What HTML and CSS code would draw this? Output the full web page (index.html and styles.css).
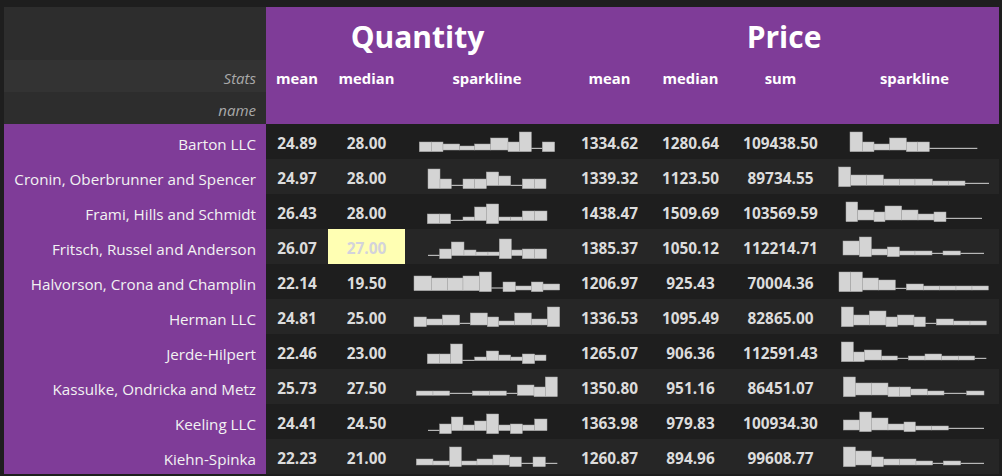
FILE: index.html
```html
<!DOCTYPE html>
<html>
<head>
<meta charset="utf-8">
<link rel="stylesheet" href="styles.css">
</head>
<body>
<table class="df">
<colgroup>
<col class="c-idx"><col class="c-qmean"><col class="c-qmed"><col class="c-qspark"><col class="c-pmean"><col class="c-pmed"><col class="c-psum"><col class="c-pspark">
</colgroup>
<thead>
<tr class="r-title"><th class="blank"></th><th class="grp" colspan="3">Quantity</th><th class="grp" colspan="4">Price</th></tr>
<tr class="r-stats"><th class="lvl lvl-alt">Stats</th><th class="col">mean</th><th class="col">median</th><th class="col">sparkline</th><th class="col">mean</th><th class="col">median</th><th class="col">sum</th><th class="col">sparkline</th></tr>
<tr class="r-name"><th class="lvl">name</th><th class="col"></th><th class="col"></th><th class="col"></th><th class="col"></th><th class="col"></th><th class="col"></th><th class="col"></th></tr>
</thead>
<tbody>
<tr>
<th class="idx">Barton LLC</th><td>24.89</td><td>28.00</td>
<td class="sp sp-q"><svg class="spark" width="156" height="35" viewBox="0 0 468 105"><rect x="34" y="54" width="36" height="29"/><rect x="70" y="54" width="35" height="29"/><rect x="105" y="60" width="50" height="18"/><rect x="155" y="66" width="45" height="12"/><rect x="200" y="60" width="48" height="18"/><rect x="248" y="42" width="52" height="36"/><rect x="300" y="54" width="34" height="29"/><rect x="334" y="24" width="36" height="59"/><rect class="z" x="370" y="71.5" width="33" height="3"/><rect x="403" y="54" width="37" height="29"/></svg></td>
<td>1334.62</td><td>1280.64</td><td>109438.50</td>
<td class="sp sp-p"><svg class="spark" width="156" height="35" viewBox="0 0 468 105"><rect x="48" y="24" width="37" height="59"/><rect x="85" y="54" width="35" height="29"/><rect x="120" y="60" width="47" height="18"/><rect x="167" y="42" width="50" height="36"/><rect x="217" y="54" width="33" height="29"/><rect x="250" y="54" width="36" height="29"/><rect class="z" x="286" y="71.5" width="144" height="3"/></svg></td>
</tr>
<tr>
<th class="idx">Cronin, Oberbrunner and Spencer</th><td>24.97</td><td>28.00</td>
<td class="sp sp-q"><svg class="spark" width="156" height="35" viewBox="0 0 468 105"><rect x="60" y="30" width="36" height="59"/><rect x="96" y="60" width="34" height="29"/><rect class="z" x="130" y="77.5" width="35" height="3"/><rect x="165" y="60" width="35" height="29"/><rect x="200" y="60" width="35" height="29"/><rect x="235" y="39" width="37" height="41"/><rect x="272" y="51" width="36" height="29"/><rect class="z" x="308" y="77.5" width="35" height="3"/><rect x="343" y="60" width="37" height="29"/><rect x="380" y="60" width="34" height="29"/></svg></td>
<td>1339.32</td><td>1123.50</td><td>89734.55</td>
<td class="sp sp-p"><svg class="spark" width="156" height="35" viewBox="0 0 468 105"><rect x="14" y="24" width="36" height="59"/><rect x="50" y="48" width="47" height="31"/><rect x="97" y="48" width="51" height="31"/><rect x="148" y="60" width="48" height="19"/><rect x="196" y="60" width="47" height="19"/><rect x="243" y="60" width="52" height="19"/><rect x="295" y="66" width="48" height="13"/><rect x="343" y="66" width="50" height="13"/><rect class="z" x="393" y="71.5" width="72" height="3"/></svg></td>
</tr>
<tr>
<th class="idx">Frami, Hills and Schmidt</th><td>26.43</td><td>28.00</td>
<td class="sp sp-q"><svg class="spark" width="156" height="35" viewBox="0 0 468 105"><rect x="58" y="60" width="36" height="29"/><rect x="94" y="60" width="34" height="29"/><rect class="z" x="128" y="77.5" width="37" height="3"/><rect x="165" y="69" width="35" height="11"/><rect x="200" y="39" width="35" height="41"/><rect x="235" y="30" width="37" height="59"/><rect x="272" y="69" width="36" height="11"/><rect x="308" y="69" width="35" height="11"/><rect x="343" y="51" width="37" height="29"/><rect x="380" y="51" width="37" height="29"/></svg></td>
<td>1438.47</td><td>1509.69</td><td>103569.59</td>
<td class="sp sp-p"><svg class="spark" width="156" height="35" viewBox="0 0 468 105"><rect x="36" y="24" width="35" height="59"/><rect x="71" y="48" width="49" height="30"/><rect x="120" y="54" width="33" height="29"/><rect x="153" y="36" width="50" height="42"/><rect x="203" y="48" width="49" height="30"/><rect x="252" y="60" width="48" height="18"/><rect x="300" y="54" width="36" height="29"/><rect class="z" x="336" y="71.5" width="108" height="3"/></svg></td>
</tr>
<tr>
<th class="idx">Fritsch, Russel and Anderson</th><td>26.07</td><td class="hl">27.00</td>
<td class="sp sp-q"><svg class="spark" width="156" height="35" viewBox="0 0 468 105"><rect class="z" x="60" y="77.5" width="35" height="3"/><rect x="95" y="60" width="35" height="29"/><rect x="130" y="39" width="38" height="41"/><rect x="168" y="63" width="36" height="17"/><rect x="204" y="69" width="36" height="11"/><rect x="240" y="69" width="34" height="11"/><rect x="274" y="30" width="36" height="59"/><rect x="310" y="63" width="33" height="17"/><rect x="343" y="60" width="37" height="29"/><rect x="380" y="60" width="36" height="29"/></svg></td>
<td>1385.37</td><td>1050.12</td><td>112214.71</td>
<td class="sp sp-p"><svg class="spark" width="156" height="35" viewBox="0 0 468 105"><rect x="27" y="36" width="49" height="42"/><rect x="76" y="24" width="36" height="59"/><rect x="112" y="60" width="48" height="18"/><rect x="160" y="54" width="36" height="29"/><rect x="196" y="66" width="47" height="12"/><rect x="243" y="66" width="51" height="12"/><rect class="z" x="294" y="71.5" width="33" height="3"/><rect x="327" y="66" width="52" height="12"/><rect class="z" x="379" y="71.5" width="71" height="3"/></svg></td>
</tr>
<tr>
<th class="idx">Halvorson, Crona and Champlin</th><td>22.14</td><td>19.50</td>
<td class="sp sp-q"><svg class="spark" width="156" height="35" viewBox="0 0 468 105"><rect x="18" y="36" width="52" height="44"/><rect x="70" y="42" width="48" height="38"/><rect x="118" y="42" width="47" height="38"/><rect x="165" y="36" width="49" height="44"/><rect x="214" y="24" width="36" height="59"/><rect class="z" x="250" y="70.5" width="35" height="3"/><rect x="285" y="54" width="37" height="29"/><rect x="322" y="66" width="48" height="12"/><rect x="370" y="54" width="35" height="29"/><rect x="405" y="60" width="50" height="18"/></svg></td>
<td>1206.97</td><td>925.43</td><td>70004.36</td>
<td class="sp sp-p"><svg class="spark" width="156" height="35" viewBox="0 0 468 105"><rect x="15" y="24" width="35" height="59"/><rect x="50" y="24" width="35" height="59"/><rect x="85" y="42" width="48" height="36"/><rect x="133" y="48" width="51" height="30"/><rect class="z" x="184" y="71.5" width="33" height="3"/><rect x="217" y="60" width="51" height="18"/><rect x="268" y="66" width="48" height="12"/><rect x="316" y="66" width="50" height="12"/><rect x="366" y="66" width="48" height="12"/><rect x="414" y="66" width="49" height="12"/></svg></td>
</tr>
<tr>
<th class="idx">Herman LLC</th><td>24.81</td><td>25.00</td>
<td class="sp sp-q"><svg class="spark" width="156" height="35" viewBox="0 0 468 105"><rect x="18" y="54" width="37" height="29"/><rect x="55" y="60" width="48" height="18"/><rect x="103" y="48" width="52" height="30"/><rect class="z" x="155" y="71.5" width="32" height="3"/><rect x="187" y="42" width="51" height="36"/><rect x="238" y="54" width="34" height="29"/><rect x="272" y="66" width="48" height="12"/><rect x="320" y="42" width="50" height="36"/><rect x="370" y="60" width="48" height="18"/><rect x="418" y="24" width="37" height="59"/></svg></td>
<td>1336.53</td><td>1095.49</td><td>82865.00</td>
<td class="sp sp-p"><svg class="spark" width="156" height="35" viewBox="0 0 468 105"><rect x="22" y="24" width="36" height="59"/><rect x="58" y="48" width="48" height="30"/><rect x="106" y="36" width="50" height="42"/><rect x="156" y="54" width="34" height="29"/><rect x="190" y="48" width="50" height="30"/><rect x="240" y="54" width="34" height="29"/><rect class="z" x="274" y="71.5" width="33" height="3"/><rect x="307" y="60" width="51" height="18"/><rect x="358" y="66" width="50" height="12"/><rect x="408" y="66" width="49" height="12"/></svg></td>
</tr>
<tr>
<th class="idx">Jerde-Hilpert</th><td>22.46</td><td>23.00</td>
<td class="sp sp-q"><svg class="spark" width="156" height="35" viewBox="0 0 468 105"><rect x="58" y="60" width="36" height="29"/><rect x="94" y="60" width="34" height="29"/><rect x="128" y="30" width="35" height="59"/><rect class="z" x="163" y="77.5" width="37" height="3"/><rect x="200" y="69" width="35" height="11"/><rect x="235" y="51" width="37" height="29"/><rect x="272" y="63" width="36" height="17"/><rect x="308" y="69" width="35" height="11"/><rect x="343" y="60" width="37" height="29"/><rect x="380" y="63" width="34" height="17"/></svg></td>
<td>1265.07</td><td>906.36</td><td>112591.43</td>
<td class="sp sp-p"><svg class="spark" width="156" height="35" viewBox="0 0 468 105"><rect x="22" y="24" width="36" height="59"/><rect x="58" y="54" width="33" height="29"/><rect x="91" y="48" width="51" height="30"/><rect x="142" y="66" width="48" height="12"/><rect class="z" x="190" y="71.5" width="33" height="3"/><rect x="223" y="66" width="50" height="12"/><rect x="273" y="60" width="50" height="18"/><rect x="323" y="66" width="50" height="12"/><rect x="373" y="66" width="49" height="12"/><rect class="z" x="422" y="71.5" width="35" height="3"/></svg></td>
</tr>
<tr>
<th class="idx">Kassulke, Ondricka and Metz</th><td>25.73</td><td>27.50</td>
<td class="sp sp-q"><svg class="spark" width="156" height="35" viewBox="0 0 468 105"><rect x="25" y="66" width="50" height="13"/><rect x="75" y="66" width="50" height="13"/><rect class="z" x="125" y="71.5" width="68" height="3"/><rect x="193" y="66" width="52" height="13"/><rect x="245" y="66" width="50" height="13"/><rect class="z" x="295" y="71.5" width="33" height="3"/><rect x="328" y="48" width="50" height="31"/><rect x="378" y="54" width="34" height="29"/><rect x="412" y="24" width="36" height="59"/></svg></td>
<td>1350.80</td><td>951.16</td><td>86451.07</td>
<td class="sp sp-p"><svg class="spark" width="156" height="35" viewBox="0 0 468 105"><rect x="28" y="24" width="36" height="59"/><rect x="64" y="42" width="48" height="36"/><rect x="112" y="42" width="50" height="36"/><rect x="162" y="54" width="34" height="29"/><rect x="196" y="54" width="34" height="29"/><rect x="230" y="60" width="50" height="18"/><rect x="280" y="66" width="50" height="12"/><rect class="z" x="330" y="71.5" width="68" height="3"/><rect x="398" y="66" width="52" height="12"/></svg></td>
</tr>
<tr>
<th class="idx">Keeling LLC</th><td>24.41</td><td>24.50</td>
<td class="sp sp-q"><svg class="spark" width="156" height="35" viewBox="0 0 468 105"><rect class="z" x="60" y="77.5" width="35" height="3"/><rect x="95" y="60" width="35" height="29"/><rect x="130" y="39" width="35" height="41"/><rect x="165" y="63" width="35" height="17"/><rect x="200" y="51" width="36" height="29"/><rect x="236" y="30" width="36" height="59"/><rect x="272" y="63" width="35" height="17"/><rect x="307" y="60" width="36" height="29"/><rect x="343" y="63" width="37" height="17"/><rect x="380" y="45" width="37" height="35"/></svg></td>
<td>1363.98</td><td>979.83</td><td>100934.30</td>
<td class="sp sp-p"><svg class="spark" width="156" height="35" viewBox="0 0 468 105"><rect x="28" y="48" width="49" height="30"/><rect x="77" y="24" width="35" height="59"/><rect x="112" y="42" width="50" height="36"/><rect x="162" y="60" width="48" height="18"/><rect x="210" y="54" width="34" height="29"/><rect x="244" y="66" width="49" height="12"/><rect x="293" y="66" width="50" height="12"/><rect class="z" x="343" y="71.5" width="107" height="3"/></svg></td>
</tr>
<tr>
<th class="idx">Kiehn-Spinka</th><td>22.23</td><td>21.00</td>
<td class="sp sp-q"><svg class="spark" width="156" height="35" viewBox="0 0 468 105"><rect x="25" y="60" width="50" height="18"/><rect x="75" y="66" width="50" height="12"/><rect x="125" y="24" width="35" height="59"/><rect x="160" y="66" width="47" height="12"/><rect x="207" y="60" width="48" height="18"/><rect x="255" y="48" width="50" height="30"/><rect x="305" y="54" width="35" height="29"/><rect class="z" x="340" y="71.5" width="35" height="3"/><rect x="375" y="54" width="37" height="29"/><rect class="z" x="412" y="71.5" width="36" height="3"/></svg></td>
<td>1260.87</td><td>894.96</td><td>99608.77</td>
<td class="sp sp-p"><svg class="spark" width="156" height="35" viewBox="0 0 468 105"><rect x="28" y="24" width="36" height="59"/><rect x="64" y="36" width="48" height="42"/><rect x="112" y="54" width="36" height="29"/><rect x="148" y="60" width="49" height="18"/><rect x="197" y="60" width="49" height="18"/><rect x="246" y="66" width="50" height="12"/><rect class="z" x="296" y="71.5" width="32" height="3"/><rect x="328" y="66" width="52" height="12"/><rect class="z" x="380" y="71.5" width="70" height="3"/></svg></td>
</tr>
</tbody>
</table>
</body>
</html>
```
FILE: styles.css
```css
html, body {
  margin: 0;
  padding: 0;
  background: #1e1e1e;
}
body {
  padding: 7px 0 0 4px;
  font-family: "Open Sans", "Noto Sans", sans-serif;
}
.df {
  border-collapse: collapse;
  border-spacing: 0;
  table-layout: fixed;
  width: 995px;
}
.c-idx { width: 262px; }
.c-qmean { width: 62px; }
.c-qmed { width: 77px; }
.c-qspark { width: 164px; }
.c-pmean { width: 81px; }
.c-pmed { width: 81px; }
.c-psum { width: 99px; }
.c-pspark { width: 169px; }

.df th, .df td {
  padding: 0;
  white-space: nowrap;
  overflow: hidden;
  box-sizing: border-box;
}
.df .r-title th { height: 53px; }
.df .r-stats th, .df .r-name th { height: 32px; padding-top: 3px; }
.df .blank { background: #2d2d2d; }
.df .grp {
  background: #7f3c98;
  color: #ffffff;
  font-size: 30px;
  font-weight: 700;
  text-align: center;
  padding-top: 6px;
}
.df .lvl {
  background: #2d2d2d;
  color: #a9a9a9;
  font-style: italic;
  font-weight: 400;
  font-size: 15px;
  text-align: right;
  padding-right: 10px;
}
.df .lvl-alt { background: #333333; }
.df .col {
  background: #7f3c98;
  color: #ffffff;
  font-size: 14.8px;
  font-weight: 700;
  text-align: center;
}
.df tbody tr { height: 35px; }
.df tbody tr:nth-child(odd) td { background: #1e1e1e; }
.df tbody tr:nth-child(even) td { background: #262626; }
.df .idx {
  background: #7f3c98;
  color: #f2f2f2;
  font-weight: 400;
  font-size: 15.2px;
  text-align: right;
  padding: 4px 10px 0 0;
}
.df td {
  color: #dcdcdc;
  font-weight: 700;
  font-size: 15.4px;
  text-align: center;
  padding-top: 4px;
}
.df tbody tr:nth-child(n) td.hl {
  background: #ffffb3;
  color: #d3d3db;
}
.df td.sp { text-align: left; line-height: 0; padding: 0; }
.spark { display: block; }
.sp-q .spark { margin-left: 3px; }
.sp-p .spark { margin-left: 4px; }
.spark rect {
  fill: #d4d4d4;
  stroke: #a8a8a8;
  stroke-width: 1.5;
}
.spark rect.z { stroke: none; }
```
